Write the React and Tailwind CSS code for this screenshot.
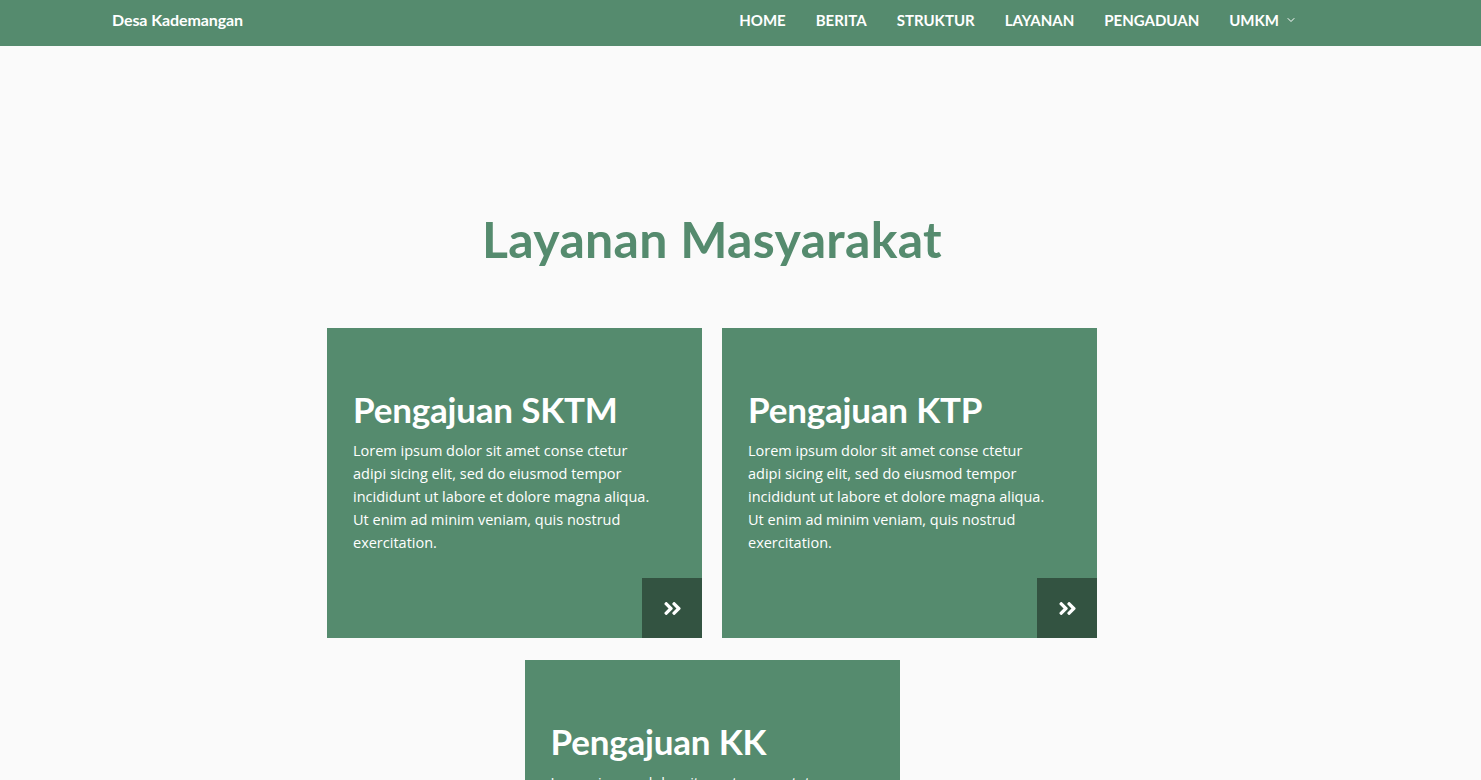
import { FaAngleDoubleRight } from "react-icons/fa";
import { ChevronDown } from "lucide-react";

const heading = { fontFamily: "Lato, 'Open Sans', sans-serif" };
const body = { fontFamily: "'Open Sans', Lato, sans-serif" };

const lorem =
  "Lorem ipsum dolor sit amet conse ctetur adipi sicing elit, sed do eiusmod tempor incididunt ut labore et dolore magna aliqua. Ut enim ad minim veniam, quis nostrud exercitation.";

function ServiceCard({ title }) {
  return (
    <div className="relative w-[375px] h-[310px] bg-[#558b6e] text-white px-[26px] pt-[59px]">
      <h3 style={heading} className="text-[35px] font-bold leading-[44px] tracking-[-0.2px]">
        {title}
      </h3>
      <p style={body} className="mt-[8px] w-[308px] text-[14.5px] leading-[23px] text-white">
        {lorem}
      </p>
      <button className="absolute right-0 bottom-0 w-[60px] h-[60px] bg-[#335341] flex items-center justify-center text-white">
        <FaAngleDoubleRight size={21} />
      </button>
    </div>
  );
}

export default function App() {
  const links = ["HOME", "BERITA", "STRUKTUR", "LAYANAN", "PENGADUAN"];
  return (
    <div className="min-h-screen bg-[#fafafa]" style={heading}>
      <nav className="h-[46px] bg-[#558b6e] flex items-center justify-between pl-[112px] pr-[184px] pb-[6px] text-white">
        <div className="text-[16px] font-bold tracking-[-0.1px]">Desa Kademangan</div>
        <ul className="flex items-center gap-[30px] text-[15px] font-bold">
          {links.map((l) => (
            <li key={l}>{l}</li>
          ))}
          <li className="flex items-center gap-[6px]">
            UMKM <ChevronDown size={12} strokeWidth={2} />
          </li>
        </ul>
      </nav>

      <section className="w-[1424px] pt-[163px] flex flex-col items-center">
        <h2 className="text-[50px] font-bold text-[#558b6e] leading-[60px] tracking-[0.3px]">
          Layanan Masyarakat
        </h2>
        <div className="mt-[59px] w-[770px] flex flex-wrap justify-center gap-x-[20px] gap-y-[22px]">
          <ServiceCard title="Pengajuan SKTM" />
          <ServiceCard title="Pengajuan KTP" />
          <ServiceCard title="Pengajuan KK" />
        </div>
      </section>
    </div>
  );
}
